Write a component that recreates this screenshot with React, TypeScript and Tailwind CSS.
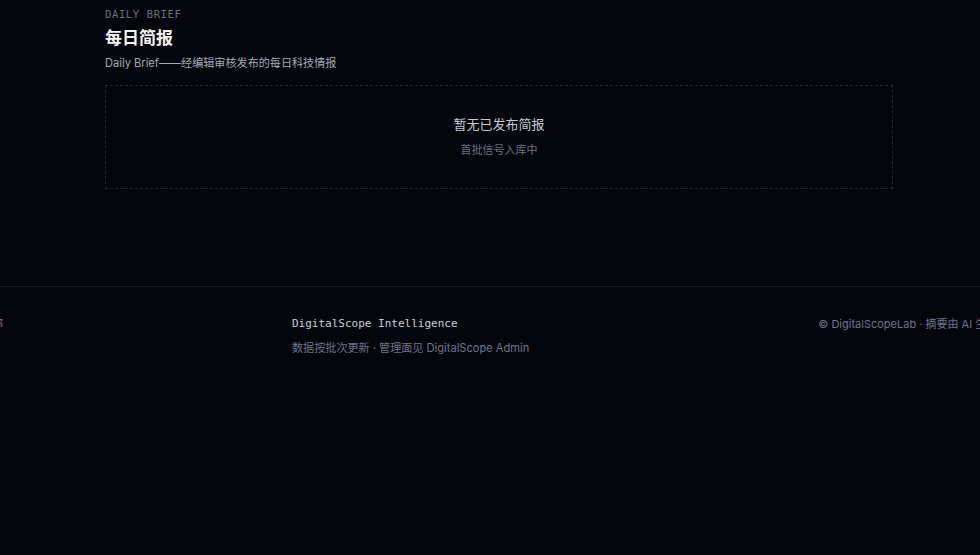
import React from "react";

export default function App() {
  const sans = { fontFamily: 'Inter, "Noto Sans CJK SC", sans-serif' } as React.CSSProperties;
  return (
    <div className="min-h-[555px] w-[980px] overflow-hidden bg-[#05060b]" style={sans}>
      <main className="ml-[105px] w-[788px] pt-[7px] pb-[97px]">
        <div className="text-[10.5px] leading-[14px] tracking-[0.06em] text-[#6b7280]" style={{ fontFamily: '"DejaVu Sans Mono", monospace' }}>
          DAILY BRIEF
        </div>
        <h1 className="mt-[6px] text-[17px] font-bold leading-[22px] text-[#f3f4f6]">每日简报</h1>
        <p className="mt-[6px] text-[11.1px] leading-[16px] text-[#a3abb8]">Daily Brief——经编辑审核发布的每日科技情报</p>
        <div className="mt-[14px] flex h-[104px] flex-col items-center border border-dashed border-[#23262f] pt-[29px]">
          <div className="text-[13px] leading-[18px] text-[#c4cad4]">暂无已发布简报</div>
          <div className="mt-[9px] text-[11px] leading-[16px] text-[#6b7280]">首批信号入库中</div>
        </div>
      </main>
      <footer className="border-t border-[#181b23]">
        <div className="flex gap-[289px] pt-[29px]">
          <div className="-ml-[197px] w-[200px] shrink-0 text-right text-[11px] leading-[16px] text-[#8b93a1]">数据来源见原文标称</div>
          <div className="shrink-0">
            <div className="text-[11px] leading-[16px] text-[#c8ced8]" style={{ fontFamily: '"DejaVu Sans Mono", monospace' }}>
              DigitalScope Intelligence
            </div>
            <div className="mt-[8px] text-[11.1px] leading-[16px] text-[#6b7689]">数据按批次更新 · 管理面见 DigitalScope Admin</div>
          </div>
          <div className="shrink-0 whitespace-nowrap text-[11px] leading-[16px] text-[#6b7689]">© DigitalScopeLab · 摘要由 AI 生成</div>
        </div>
      </footer>
    </div>
  );
}
